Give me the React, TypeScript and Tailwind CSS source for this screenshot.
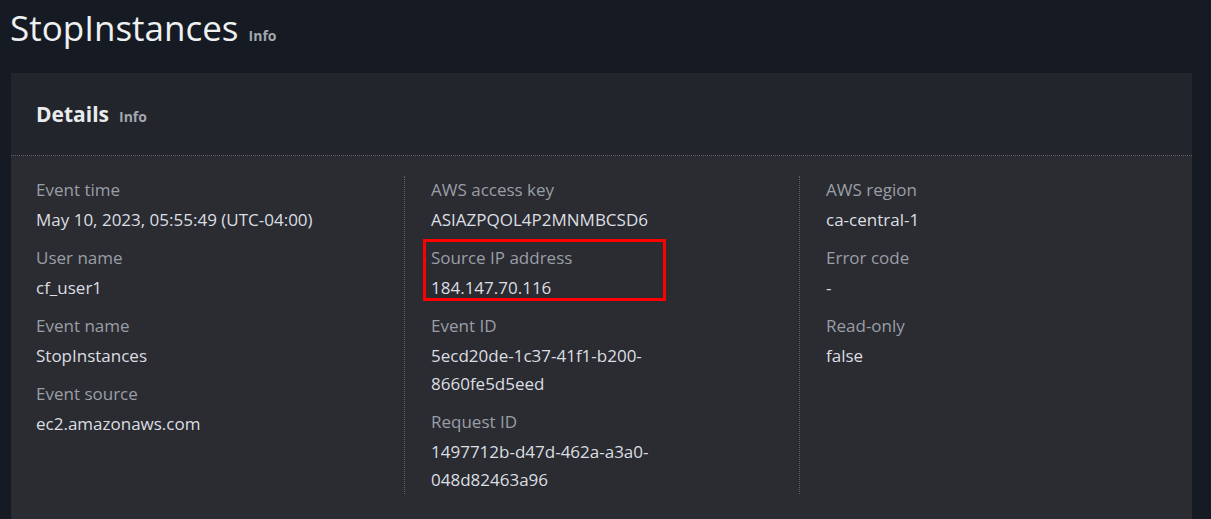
import React from "react";

type Field = { label: string; value: string[]; highlight?: boolean };

const col1: Field[] = [
  { label: "Event time", value: ["May 10, 2023, 05:55:49 (UTC-04:00)"] },
  { label: "User name", value: ["cf_user1"] },
  { label: "Event name", value: ["StopInstances"] },
  { label: "Event source", value: ["ec2.amazonaws.com"] },
];
const col2: Field[] = [
  { label: "AWS access key", value: ["ASIAZPQOL4P2MNMBCSD6"] },
  { label: "Source IP address", value: ["184.147.70.116"], highlight: true },
  { label: "Event ID", value: ["5ecd20de-1c37-41f1-b200-", "8660fe5d5eed"] },
  { label: "Request ID", value: ["1497712b-d47d-462a-a3a0-", "048d82463a96"] },
];
const col3: Field[] = [
  { label: "AWS region", value: ["ca-central-1"] },
  { label: "Error code", value: ["-"] },
  { label: "Read-only", value: ["false"] },
];

function FieldView({ f }: { f: Field }) {
  return (
    <div className="relative flex flex-col gap-[2px]">
      {f.highlight && (
        <div className="absolute left-[-8px] top-[-5px] w-[243px] h-[62px] border-[3px] border-[#ff0000] pointer-events-none" />
      )}
      <div className="text-[17px] leading-[28px] text-[#9a9ea6]">{f.label}</div>
      <div className="text-[17px] leading-[28px] font-medium text-[#dcdee1]">
        {f.value.map((v, i) => (
          <div key={i}>{v}</div>
        ))}
      </div>
    </div>
  );
}

function Column({ fields, border }: { fields: Field[]; border?: boolean }) {
  return (
    <div className={border ? "flex flex-col gap-[10px] border-l border-dotted border-[#5c6068] pl-[26px]" : "flex flex-col gap-[10px]"}>
      {fields.map((f) => (
        <FieldView key={f.label} f={f} />
      ))}
    </div>
  );
}

export default function App() {
  return (
    <div
      className="w-[1211px] h-[519px] overflow-hidden bg-[#161a22] pl-[11px] pr-[19px] pt-[8px]"
      style={{ fontFamily: '"Open Sans", "Noto Sans", sans-serif' }}
    >
      <div className="flex items-baseline gap-[10px] h-[40px]">
        <h1 className="text-[35px] leading-[40px] text-[#eef0f2] font-normal -ml-[1px]">StopInstances</h1>
        <span className="text-[14px] font-bold text-[#a3a7ae]">Info</span>
      </div>
      <div className="mt-[25px] bg-[#2a2c32] h-[460px]">
        <div className="bg-[#22252b] h-[83px] flex items-center gap-[10px] px-[25px] border-b border-dotted border-[#5c6068]">
          <span className="text-[21px] font-bold text-[#e9ebed] leading-[28px]">Details</span>
          <span className="text-[14px] font-bold text-[#a3a7ae] mt-[4px]">Info</span>
        </div>
        <div className="grid grid-cols-[368px_395px_1fr] pl-[25px] pr-[25px] pt-[20px]">
          <Column fields={col1} />
          <Column fields={col2} border />
          <Column fields={col3} border />
        </div>
      </div>
    </div>
  );
}
